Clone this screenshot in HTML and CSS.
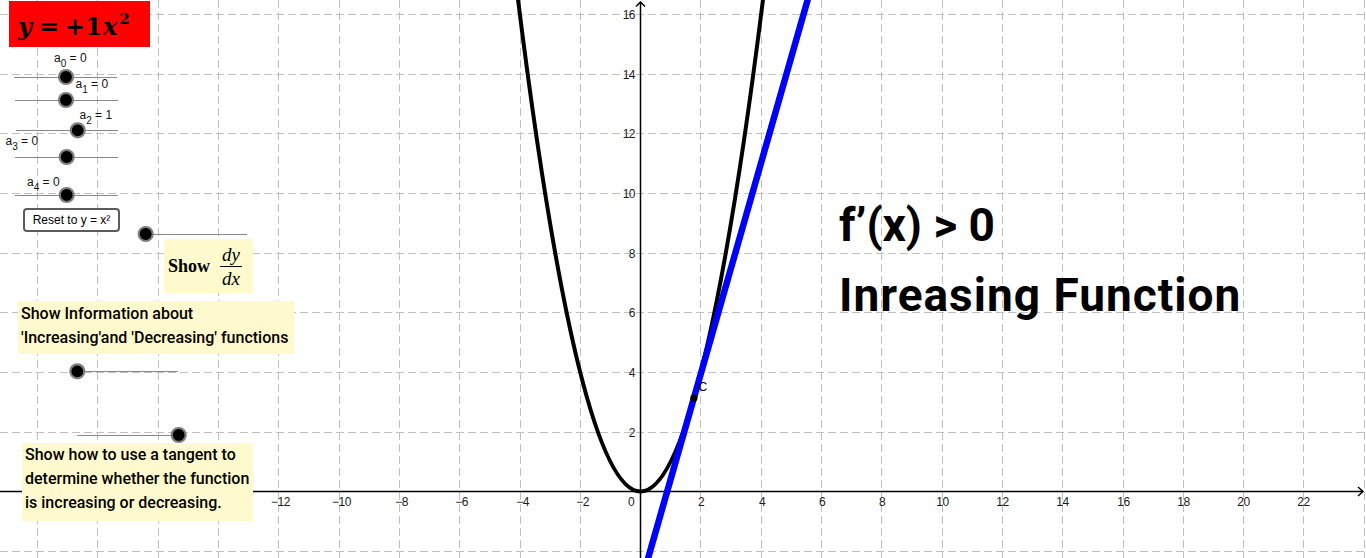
FILE: index.html
```html
<!DOCTYPE html>
<html lang="en">
<head>
<meta charset="utf-8">
<title>Increasing Function</title>
<link rel="stylesheet" href="styles.css">
</head>
<body>
<div class="canvas">
  <svg class="graph" width="1366" height="558" viewBox="0 0 1366 558" xmlns="http://www.w3.org/2000/svg">
    <path class="grid" d="M37.5 0V558M97.5 0V558M158.5 0V558M218.5 0V558M278.5 0V558M339.5 0V558M399.5 0V558M459.5 0V558M520.5 0V558M580.5 0V558M700.5 0V558M761.5 0V558M821.5 0V558M881.5 0V558M942.5 0V558M1002.5 0V558M1062.5 0V558M1123.5 0V558M1183.5 0V558M1243.5 0V558M1303.5 0V558M1364.5 0V558M0 14.5H1366M0 74.5H1366M0 133.5H1366M0 193.5H1366M0 253.5H1366M0 312.5H1366M0 372.5H1366M0 432.5H1366M0 551.5H1366"/>
    <path class="axis" d="M0 491.5H1363M1358 487L1363 491.5L1358 496M640.5 558V2M636 6.5L640.5 2L645 6.5"/>
    <g class="ticks xticks">
      <text x="280.5" y="506">−12</text>
      <text x="341.5" y="506">−10</text>
      <text x="401.5" y="506">−8</text>
      <text x="461.5" y="506">−6</text>
      <text x="522.5" y="506">−4</text>
      <text x="582.5" y="506">−2</text>
      <text x="631" y="506">0</text>
      <text x="701" y="506">2</text>
      <text x="762" y="506">4</text>
      <text x="822" y="506">6</text>
      <text x="882" y="506">8</text>
      <text x="942.5" y="506">10</text>
      <text x="1002.5" y="506">12</text>
      <text x="1062.5" y="506">14</text>
      <text x="1123.5" y="506">16</text>
      <text x="1183.5" y="506">18</text>
      <text x="1243.5" y="506">20</text>
      <text x="1303.5" y="506">22</text>
    </g>
    <g class="ticks yticks">
      <text x="635" y="19">16</text>
      <text x="635" y="79">14</text>
      <text x="635" y="138">12</text>
      <text x="635" y="198">10</text>
      <text x="635" y="258">8</text>
      <text x="635" y="317">6</text>
      <text x="635" y="377">4</text>
      <text x="635" y="437">2</text>
    </g>
    <path class="curve" d="M516.9 -9.4Q640.5 992.4 764.1 -9.4"/>
    <path class="tangent" d="M646.5 563.8L809.3 -5.9"/>
    <circle class="point" cx="693.9" cy="398.1" r="3.6"/>
    <text class="point-label" x="698.5" y="391">C</text>

    <g class="sliders">
      <path class="track" d="M14 77.5H117M15 100.5H118M16 130.5H118M15 157.5H118M15 195.5H118M146 234.5H247M77 371.5H178M77 435.5H178"/>
      <circle class="knob" cx="66" cy="77" r="7"/>
      <circle class="knob" cx="66" cy="100" r="7"/>
      <circle class="knob" cx="77.7" cy="130.3" r="7"/>
      <circle class="knob" cx="66.7" cy="157" r="7"/>
      <circle class="knob" cx="66.7" cy="195" r="7"/>
      <circle class="knob" cx="145.7" cy="234" r="7"/>
      <circle class="knob" cx="77.3" cy="371.3" r="7"/>
      <circle class="knob" cx="178.7" cy="435" r="7"/>
    </g>
    <g class="slider-labels">
      <text x="54" y="61.5">a<tspan class="sub" dy="5">0</tspan><tspan dy="-5"> = 0</tspan></text>
      <text x="75.5" y="87.5">a<tspan class="sub" dy="5">1</tspan><tspan dy="-5"> = 0</tspan></text>
      <text x="79.5" y="119">a<tspan class="sub" dy="5">2</tspan><tspan dy="-5"> = 1</tspan></text>
      <text x="5.5" y="145">a<tspan class="sub" dy="5">3</tspan><tspan dy="-5"> = 0</tspan></text>
      <text x="27" y="186">a<tspan class="sub" dy="5">4</tspan><tspan dy="-5"> = 0</tspan></text>
    </g>
  </svg>

  <div class="formula"><i>y</i><span class="op">=</span><span class="num">+1</span><i>x</i><sup>2</sup></div>

  <div class="reset-btn">Reset to y = x²</div>

  <div class="note note-dydx">
    <span class="show">Show</span>
    <span class="frac"><span class="frac-num">dy</span><span class="frac-den">dx</span></span>
  </div>

  <div class="note note-info">Show Information about<br>'Increasing'and 'Decreasing' functions</div>

  <div class="note note-tangent">Show how to use a tangent to<br>determine whether the function<br>is increasing or decreasing.</div>

  <div class="headline"><div class="headline-cond">f’(x) &gt; 0</div><div class="headline-name">Inreasing Function</div></div>
</div>
</body>
</html>
```

FILE: styles.css
```css
html, body {
  margin: 0;
  padding: 0;
  background: #ffffff;
}

body {
  width: 1366px;
  height: 558px;
  overflow: hidden;
  font-family: "Liberation Sans", Arial, sans-serif;
  color: #000;
}

.canvas {
  position: relative;
  width: 1366px;
  height: 558px;
}

.graph {
  position: absolute;
  left: 0;
  top: 0;
  display: block;
}

.grid {
  fill: none;
  stroke: #c0c0c0;
  stroke-width: 1;
  stroke-dasharray: 8 4;
}

.axis {
  fill: none;
  stroke: #000;
  stroke-width: 1.5;
}

.ticks text {
  font-family: "Liberation Sans", Arial, sans-serif;
  font-size: 12px;
  letter-spacing: -0.5px;
  fill: #1a1a1a;
}

.xticks text {
  text-anchor: middle;
}

.yticks text {
  text-anchor: end;
}

.curve {
  fill: none;
  stroke: #000;
  stroke-width: 4;
}

.tangent {
  fill: none;
  stroke: #0000ff;
  stroke-width: 6.5;
}

.point {
  fill: #000;
}

.point-label {
  font-family: "Liberation Sans", Arial, sans-serif;
  font-size: 12px;
  fill: #000;
}

.track {
  fill: none;
  stroke: #8a8a8a;
  stroke-width: 1;
}

.knob {
  fill: #000;
  stroke: #7d7d7d;
  stroke-width: 2.2;
}

.slider-labels text {
  font-family: "Liberation Sans", Arial, sans-serif;
  font-size: 12px;
  fill: #111;
}

.slider-labels .sub {
  font-size: 10px;
}

/* formula box */
.formula {
  position: absolute;
  left: 9px;
  top: 1px;
  width: 141px;
  height: 46px;
  box-sizing: border-box;
  padding: 7px 0 0 9px;
  background: #ff0000;
  display: flex;
  align-items: baseline;
  font-family: "DejaVu Serif", "Liberation Serif", serif;
  font-weight: bold;
  font-size: 24px;
  line-height: 37px;
  color: #000;
  overflow: hidden;
}

.formula i {
  font-style: italic;
}

.formula .op {
  margin: 0 6px 0 7px;
}

.formula .num {
  margin-right: 1px;
}

.formula sup {
  font-size: 15px;
  line-height: 1;
  position: relative;
  top: -11px;
  margin-left: 2px;
  vertical-align: baseline;
}

/* button */
.reset-btn {
  position: absolute;
  left: 23px;
  top: 208px;
  width: 97px;
  height: 24px;
  box-sizing: border-box;
  border: 2px solid #5c5c5c;
  border-radius: 4px;
  background: #fff;
  font-size: 12px;
  display: flex;
  align-items: center;
  justify-content: center;
  color: #000;
}

/* yellow notes */
.note {
  position: absolute;
  box-sizing: border-box;
  background: #fffacd;
  font-family: Roboto, "Liberation Sans", sans-serif;
  font-weight: 500;
  font-size: 16px;
  line-height: 24px;
  color: #000;
  white-space: nowrap;
}

.note-dydx {
  left: 164px;
  top: 239px;
  width: 89px;
  height: 54px;
  display: flex;
  align-items: center;
  gap: 10px;
  padding-left: 4px;
  font-family: "Liberation Serif", serif;
}

.show {
  font-weight: bold;
  font-size: 18px;
}

.frac {
  display: flex;
  flex-direction: column;
  align-items: center;
  font-family: "Liberation Serif", serif;
  font-style: italic;
  font-weight: normal;
  font-size: 19px;
  line-height: 17px;
}

.frac-num {
  padding: 0 2px 3px;
  border-bottom: 1px solid #000;
}

.frac-den {
  padding: 3px 2px 0;
}

.note-info {
  left: 18px;
  top: 301px;
  width: 276px;
  height: 53px;
  padding: 1px 3px 0;
}

.note-tangent {
  left: 22px;
  top: 443px;
  width: 231px;
  height: 78px;
  padding: 0 3px;
}

.headline {
  position: absolute;
  left: 839px;
  top: 190px;
  font-family: Roboto, "Liberation Sans", sans-serif;
  font-weight: 700;
  font-size: 46px;
  line-height: 70px;
  white-space: nowrap;
  color: #000;
}

.headline-name {
  letter-spacing: 1px;
}
```
